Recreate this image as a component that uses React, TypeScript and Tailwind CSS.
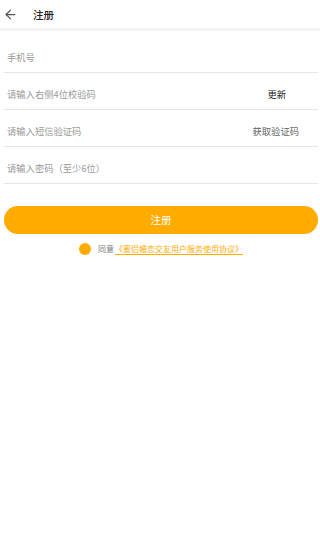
import { ArrowLeft } from "lucide-react";

const font = { fontFamily: '"Noto Sans CJK SC", "Noto Sans", sans-serif' };

const rows = [
  { placeholder: "手机号", action: "" },
  { placeholder: "请输入右侧4位校验码", action: "更新", dark: true },
  { placeholder: "请输入短信验证码", action: "获取验证码" },
  { placeholder: "请输入密码（至少6位）", action: "" },
];

export default function App() {
  return (
    <div className="min-h-[555px] bg-white" style={font}>
      {/* Header */}
      <div className="flex h-[31px] items-center border-b-[3px] border-[#f4f4f4] pt-[1px]">
        <ArrowLeft className="ml-[3px] h-[15px] w-[15px] text-[#555]" strokeWidth={2} />
        <span className="ml-[15px] text-[10.5px] font-medium text-[#222]">注册</span>
      </div>

      {/* Form */}
      <div className="pl-[4px] pr-[2px] pt-[5px]">
        {rows.map((r) => (
          <div
            key={r.placeholder}
            className="flex h-[37px] items-end justify-between border-b border-[#e6e6e6] pb-[7px] pl-[3px]"
          >
            <span className="text-[9.3px] text-[#999]">{r.placeholder}</span>
            {r.action && (
              <span
                className={
                  r.dark
                    ? "mr-[32px] text-[9.3px] text-[#222]"
                    : "mr-[19px] text-[9.3px] text-[#666]"
                }
              >
                {r.action}
              </span>
            )}
          </div>
        ))}

        <button className="mt-[22px] flex h-[28px] w-full items-center justify-center rounded-full bg-[#ffab00] text-[10.5px] text-white">
          注册
        </button>

        <div className="mt-[9px] flex items-center justify-center">
          <span className="h-[12px] w-[12px] rounded-full bg-[#ffab00]"></span>
          <span className="ml-[7px] text-[8px] text-[#777]">同意</span>
          <span className="ml-[1px] border-b border-[#ffab00] text-[8px] leading-[11px] text-[#ffab00]">
            《蜜侣婚恋交友用户服务使用协议》
          </span>
        </div>
      </div>
    </div>
  );
}
